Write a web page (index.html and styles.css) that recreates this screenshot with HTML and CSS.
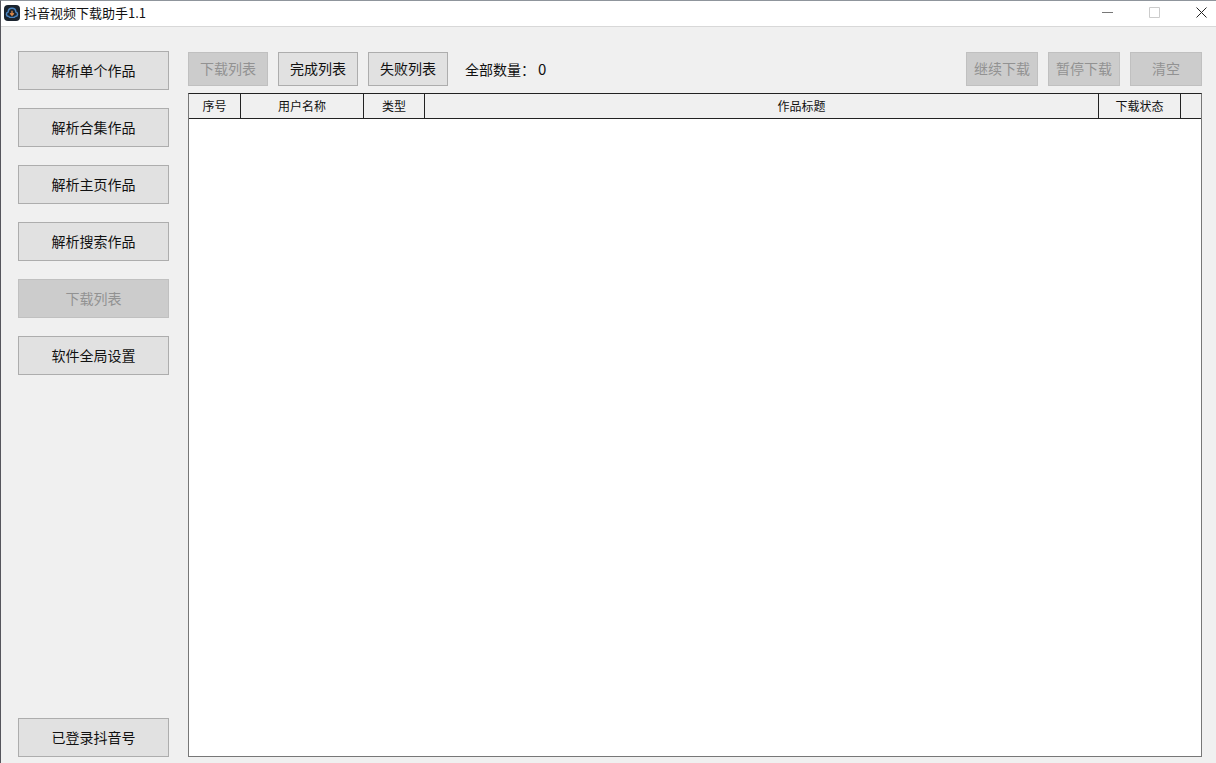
FILE: index.html
```html
<!DOCTYPE html>
<html lang="zh-CN">
<head>
  <meta charset="UTF-8">
  <meta name="viewport" content="width=device-width, initial-scale=1.0">
  <title>抖音视频下载助手1.1</title>
  <link rel="stylesheet" href="styles.css">
</head>
<body>
  <div class="window">
    <header class="titlebar">
      <svg class="logo" viewBox="0 0 16 16" aria-hidden="true">
        <rect width="16" height="16" rx="4" fill="#1a232e"/>
        <path d="M5 11.500H4.500a2.300 2.300 0 0 1-.4-4.500C4.300 4.700 6 3.200 8 3.200s3.700 1.500 3.900 3.800a2.300 2.300 0 0 1-.4 4.500H11" fill="none" stroke="#4a84c0" stroke-width="1.500" stroke-linecap="round"/>
        <path d="M5.500 12.300h5" stroke="#4a84c0" stroke-width="1.300" stroke-linecap="round"/>
        <path d="M8 5.800v4M6.200 8.300 8 10.200l1.800-1.900" fill="none" stroke="#e08a4a" stroke-width="1.300"/>
      </svg>
      <h1>抖音视频下载助手1.1</h1>
      <div class="window-controls">
        <button type="button" aria-label="最小化">
          <svg viewBox="0 0 11 11"><path d="M0 5.500h11" stroke="#777"/></svg>
        </button>
        <button type="button" aria-label="最大化" disabled>
          <svg viewBox="0 0 11 11"><path d="M.5.5h10v10H.5z" fill="none" stroke="#ccc"/></svg>
        </button>
        <button type="button" aria-label="关闭">
          <svg viewBox="0 0 11 11"><path d="M.5.5l10 10M10.500.5l-10 10" stroke="#222"/></svg>
        </button>
      </div>
    </header>

    <div class="content">
      <nav class="sidebar">
        <button type="button" class="btn">解析单个作品</button>
        <button type="button" class="btn">解析合集作品</button>
        <button type="button" class="btn">解析主页作品</button>
        <button type="button" class="btn">解析搜索作品</button>
        <button type="button" class="btn" disabled>下载列表</button>
        <button type="button" class="btn">软件全局设置</button>
        <button type="button" class="btn account">已登录抖音号</button>
      </nav>

      <main class="main">
        <div class="toolbar">
          <button type="button" class="btn" disabled>下载列表</button>
          <button type="button" class="btn">完成列表</button>
          <button type="button" class="btn">失败列表</button>
          <span class="total">全部数量：<span>0</span></span>
          <div class="actions">
            <button type="button" class="btn" disabled>继续下载</button>
            <button type="button" class="btn" disabled>暂停下载</button>
            <button type="button" class="btn" disabled>清空</button>
          </div>
        </div>

        <div class="list">
          <table>
            <thead>
              <tr>
                <th class="col-index">序号</th>
                <th class="col-user">用户名称</th>
                <th class="col-type">类型</th>
                <th class="col-title">作品标题</th>
                <th class="col-status">下载状态</th>
                <th class="col-end"></th>
              </tr>
            </thead>
            <tbody></tbody>
          </table>
        </div>
      </main>
    </div>
  </div>
</body>
</html>
```
FILE: styles.css
```css
* {
  box-sizing: border-box;
}
body {
  margin: 0;
  background-color: #f0f0f0;
  color: #111;
  font-family: "Noto Sans CJK SC", sans-serif;
  font-size: 14px;
}
.window {
  display: flex;
  flex-direction: column;
  min-height: 100vh;
  border-top: 1px solid #8f959c;
  border-left: 1px solid #55555c;
}

/* title bar */
.titlebar {
  display: flex;
  align-items: center;
  height: 26px;
  padding-left: 3px;
  padding-bottom: 2px;
  background-color: #fff;
  border-bottom: 1px solid #d8d8d8;
}
.logo {
  width: 16px;
  height: 16px;
}
h1 {
  margin: 0 0 0 4px;
  font-size: 13px;
  font-weight: normal;
  line-height: 20px;
}
.window-controls {
  display: flex;
  margin-left: auto;
}
.window-controls button {
  display: flex;
  align-items: center;
  justify-content: center;
  width: 47px;
  height: 23px;
  padding: 0;
  padding-left: 18px;
  border: none;
  background: none;
}
.window-controls svg {
  width: 11px;
  height: 11px;
}

/* body */
.content {
  display: flex;
  flex: 1;
  gap: 19px;
  padding: 24px 14px 6px 17px;
}
.sidebar {
  display: flex;
  flex-direction: column;
  gap: 18px;
  width: 151px;
}
.btn {
  padding: 0 0 2px;
  border: 1px solid #adadad;
  background-color: #e1e1e1;
  color: #111;
  font-family: inherit;
  font-size: 14px;
  line-height: 20px;
}
.btn:disabled {
  border-color: #c0c0c0;
  background-color: #ccc;
  color: #929292;
}
.sidebar .btn {
  height: 39px;
}
.sidebar .account {
  margin-top: auto;
}
.main {
  display: flex;
  flex: 1;
  flex-direction: column;
  gap: 7px;
  padding-top: 1px;
}
.toolbar {
  display: flex;
  align-items: center;
  gap: 10px;
}
.toolbar .btn {
  width: 80px;
  height: 34px;
}
.total {
  margin-left: 7px;
  padding-bottom: 2px;
}
.total span {
  margin-left: 3px;
  font-size: 15px;
}
.actions {
  display: flex;
  gap: 10px;
  margin-left: auto;
}
.actions .btn {
  width: 72px;
}

/* list */
.list {
  flex: 1;
  border: 1px solid #777;
  border-top-color: #222;
  background-color: #fff;
}
table {
  width: 100%;
  border-collapse: separate;
  border-spacing: 0;
  table-layout: fixed;
}
th {
  height: 25px;
  padding: 0;
  border-right: 1px solid #222;
  border-bottom: 1px solid #222;
  background-color: #f0f0f0;
  font-size: 12px;
  font-weight: normal;
  line-height: 20px;
}
th:last-child {
  border-right: none;
}
.col-index {
  width: 52px;
}
.col-user {
  width: 123px;
}
.col-type {
  width: 61px;
}
.col-title {
  padding-left: 80px;
}
.col-status {
  width: 82px;
}
.col-end {
  width: 20px;
}
```
